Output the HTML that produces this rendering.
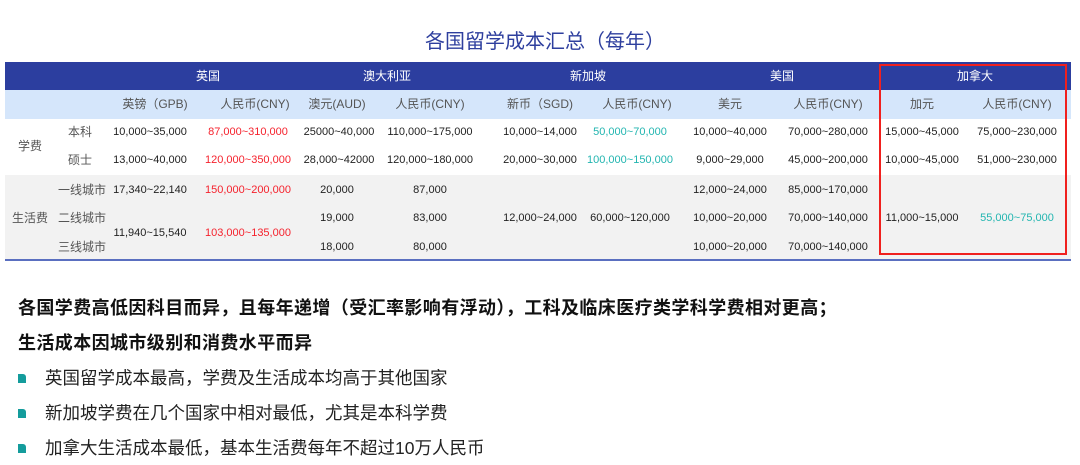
<!DOCTYPE html>
<html><head><meta charset="utf-8"><style>
body{margin:0;width:1080px;height:465px;background:#fff;position:relative;overflow:hidden;font-family:"Liberation Sans","Noto Sans CJK SC",sans-serif;}
.a{position:absolute;}
.c{position:absolute;width:200px;text-align:center;line-height:16px;font-size:11px;color:#222;white-space:nowrap;}
.h{color:#fff;font-size:12px;}
.s{color:#555;font-size:12px;}
.r{color:#f5222d;}
.t{color:#22b5b0;}
.ln{position:absolute;left:18px;font-size:17.5px;color:#222;white-space:nowrap;line-height:24px;}
.b{font-weight:bold;font-size:18px;color:#111;letter-spacing:0.4px;}
.bu{position:absolute;left:18px;width:8px;height:9px;background:#149c9c;border-top-right-radius:3px;}
</style></head><body>
<div class="a" style="left:0;top:29px;width:1090px;text-align:center;font-size:20px;color:#2e3f9e;line-height:26px;">各国留学成本汇总（每年）</div>
<div class="a" style="left:5px;top:62px;width:1066px;height:28px;background:#2c3e9f;"></div>
<div class="a" style="left:5px;top:90px;width:1066px;height:29px;background:#d5e6fb;"></div>
<div class="a" style="left:5px;top:175px;width:1066px;height:84px;background:#f2f2f2;"></div>
<div class="a" style="left:5px;top:259px;width:1066px;height:2px;background:#5a6fc0;"></div>
<div class="a" style="left:879px;top:64px;width:184px;height:187px;border:2px solid #f0201e;"></div>
<div class="c h" style="left:108px;top:68px">英国</div>
<div class="c h" style="left:287px;top:68px">澳大利亚</div>
<div class="c h" style="left:488px;top:68px">新加坡</div>
<div class="c h" style="left:682px;top:68px">美国</div>
<div class="c h" style="left:875px;top:68px">加拿大</div>
<div class="c s" style="left:55px;top:96px">英镑（GPB)</div>
<div class="c s" style="left:155px;top:96px">人民币(CNY)</div>
<div class="c s" style="left:237px;top:96px">澳元(AUD)</div>
<div class="c s" style="left:330px;top:96px">人民币(CNY)</div>
<div class="c s" style="left:440px;top:96px">新币（SGD)</div>
<div class="c s" style="left:537px;top:96px">人民币(CNY)</div>
<div class="c s" style="left:630px;top:96px">美元</div>
<div class="c s" style="left:728px;top:96px">人民币(CNY)</div>
<div class="c s" style="left:822px;top:96px">加元</div>
<div class="c s" style="left:917px;top:96px">人民币(CNY)</div>
<div class="c s" style="left:-70px;top:138px">学费</div>
<div class="c s" style="left:-20px;top:124px">本科</div>
<div class="c s" style="left:-20px;top:152px">硕士</div>
<div class="c" style="left:50px;top:124px">10,000~35,000</div>
<div class="c r" style="left:148px;top:124px">87,000~310,000</div>
<div class="c" style="left:239px;top:124px">25000~40,000</div>
<div class="c" style="left:330px;top:124px">110,000~175,000</div>
<div class="c" style="left:440px;top:124px">10,000~14,000</div>
<div class="c t" style="left:530px;top:124px">50,000~70,000</div>
<div class="c" style="left:630px;top:124px">10,000~40,000</div>
<div class="c" style="left:728px;top:124px">70,000~280,000</div>
<div class="c" style="left:822px;top:124px">15,000~45,000</div>
<div class="c" style="left:917px;top:124px">75,000~230,000</div>
<div class="c" style="left:50px;top:152px">13,000~40,000</div>
<div class="c r" style="left:148px;top:152px">120,000~350,000</div>
<div class="c" style="left:239px;top:152px">28,000~42000</div>
<div class="c" style="left:330px;top:152px">120,000~180,000</div>
<div class="c" style="left:440px;top:152px">20,000~30,000</div>
<div class="c t" style="left:530px;top:152px">100,000~150,000</div>
<div class="c" style="left:630px;top:152px">9,000~29,000</div>
<div class="c" style="left:728px;top:152px">45,000~200,000</div>
<div class="c" style="left:822px;top:152px">10,000~45,000</div>
<div class="c" style="left:917px;top:152px">51,000~230,000</div>
<div class="c s" style="left:-70px;top:210px">生活费</div>
<div class="c s" style="left:-18px;top:182px">一线城市</div>
<div class="c s" style="left:-18px;top:210px">二线城市</div>
<div class="c s" style="left:-18px;top:239px">三线城市</div>
<div class="c" style="left:50px;top:182px">17,340~22,140</div>
<div class="c r" style="left:148px;top:182px">150,000~200,000</div>
<div class="c" style="left:50px;top:225px">11,940~15,540</div>
<div class="c r" style="left:148px;top:225px">103,000~135,000</div>
<div class="c" style="left:237px;top:182px">20,000</div>
<div class="c" style="left:330px;top:182px">87,000</div>
<div class="c" style="left:237px;top:210px">19,000</div>
<div class="c" style="left:330px;top:210px">83,000</div>
<div class="c" style="left:237px;top:239px">18,000</div>
<div class="c" style="left:330px;top:239px">80,000</div>
<div class="c" style="left:440px;top:210px">12,000~24,000</div>
<div class="c" style="left:530px;top:210px">60,000~120,000</div>
<div class="c" style="left:630px;top:182px">12,000~24,000</div>
<div class="c" style="left:728px;top:182px">85,000~170,000</div>
<div class="c" style="left:630px;top:210px">10,000~20,000</div>
<div class="c" style="left:728px;top:210px">70,000~140,000</div>
<div class="c" style="left:630px;top:239px">10,000~20,000</div>
<div class="c" style="left:728px;top:239px">70,000~140,000</div>
<div class="c" style="left:822px;top:210px">11,000~15,000</div>
<div class="c t" style="left:917px;top:210px">55,000~75,000</div>
<div class="ln b" style="top:296px">各国学费高低因科目而异，且每年递增（受汇率影响有浮动），工科及临床医疗类学科学费相对更高；</div>
<div class="ln b" style="top:331px">生活成本因城市级别和消费水平而异</div>
<div class="bu" style="top:374px"></div><div class="ln" style="left:45px;top:366px">英国留学成本最高，学费及生活成本均高于其他国家</div>
<div class="bu" style="top:409px"></div><div class="ln" style="left:45px;top:401px">新加坡学费在几个国家中相对最低，尤其是本科学费</div>
<div class="bu" style="top:444px"></div><div class="ln" style="left:45px;top:436px">加拿大生活成本最低，基本生活费每年不超过10万人民币</div>
</body></html>
